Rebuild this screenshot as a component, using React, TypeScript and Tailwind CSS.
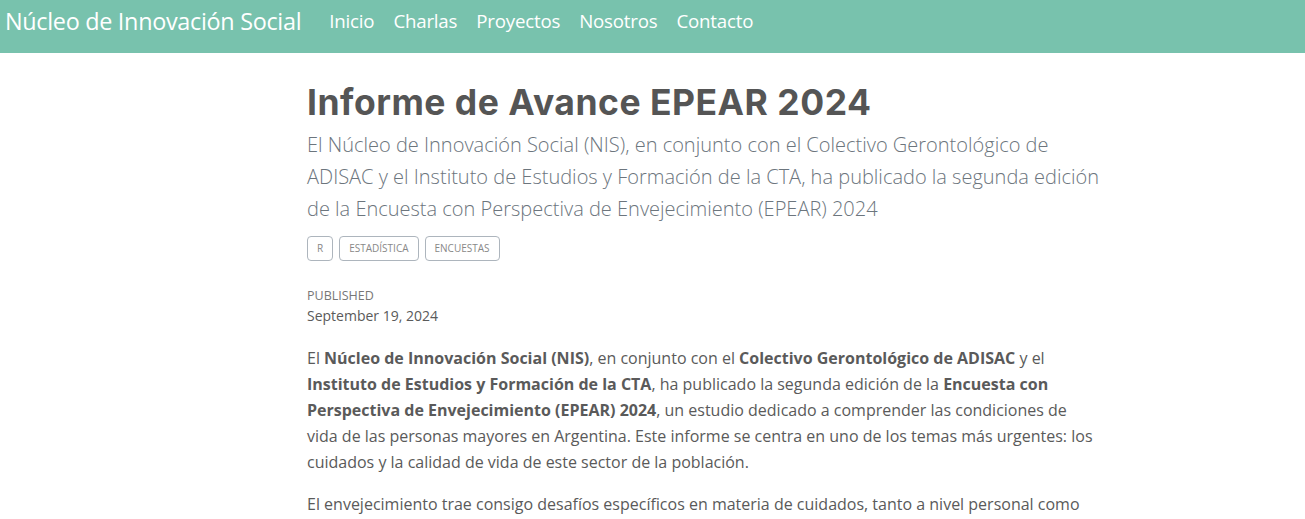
const links = ['Inicio', 'Charlas', 'Proyectos', 'Nosotros', 'Contacto'];
const tags = ['R', 'Estadística', 'Encuestas'];

const Navbar = () => (
  <nav className="flex h-[53px] items-center bg-[#78c2ad] pb-[10px] pl-[5px] font-['Open_Sans',sans-serif] text-white">
    <a className="mr-[28px] text-[23.4px] leading-none tracking-[-0.3px]">Núcleo de Innovación Social</a>
    <ul className="flex gap-[19px] text-[18.7px] leading-none tracking-[-0.2px]">
      {links.map(link => (
        <li key={link}>{link}</li>
      ))}
    </ul>
  </nav>
);

const App = () => {
  return (
    <div className="min-h-screen bg-white font-['Open_Sans',sans-serif] text-[#5a5a5a]">
      <Navbar />
      <main className="ml-[307px] w-[800px] pt-[29px]">
        <header>
          <h1 className="font-['Inter',sans-serif] text-[35.5px] font-bold leading-[42px] tracking-[0.5px] text-[#555]">
            Informe de Avance EPEAR 2024
          </h1>
          <p className="mt-[5px] text-[20px] font-light leading-[32px] text-[#6c757d]">
            El Núcleo de Innovación Social (NIS), en conjunto con el Colectivo Gerontológico de ADISAC y el Instituto de
            Estudios y Formación de la CTA, ha publicado la segunda edición de la Encuesta con Perspectiva de
            Envejecimiento (EPEAR) 2024
          </p>
          <div className="mt-[11px] flex gap-[6px]">
            {tags.map(tag => (
              <span
                key={tag}
                className="flex h-[25px] items-center rounded-[4px] border border-[#adb5bd] px-[9px] text-[10px] uppercase text-[#888]"
              >
                {tag}
              </span>
            ))}
          </div>
          <div className="mt-[25px]">
            <div className="text-[12.5px] uppercase leading-[20px] text-[#777]">Published</div>
            <div className="text-[14px] leading-[20px]">September 19, 2024</div>
          </div>
        </header>
        <section className="mt-[19px] w-[792px] text-[16px] leading-[26px]">
          <p className="mb-[16px]">
            El <strong>Núcleo de Innovación Social (NIS)</strong>, en conjunto con el{' '}
            <strong>Colectivo Gerontológico de ADISAC</strong> y el{' '}
            <strong>Instituto de Estudios y Formación de la CTA</strong>, ha publicado la segunda edición de la{' '}
            <strong>Encuesta con Perspectiva de Envejecimiento (EPEAR) 2024</strong>, un estudio dedicado a comprender
            las condiciones de vida de las personas mayores en Argentina. Este informe se centra en uno de los temas más
            urgentes: los cuidados y la calidad de vida de este sector de la población.
          </p>
          <p>
            El envejecimiento trae consigo desafíos específicos en materia de cuidados, tanto a nivel personal como
            familiar y comunitario.
          </p>
        </section>
      </main>
    </div>
  );
};

export default App;
